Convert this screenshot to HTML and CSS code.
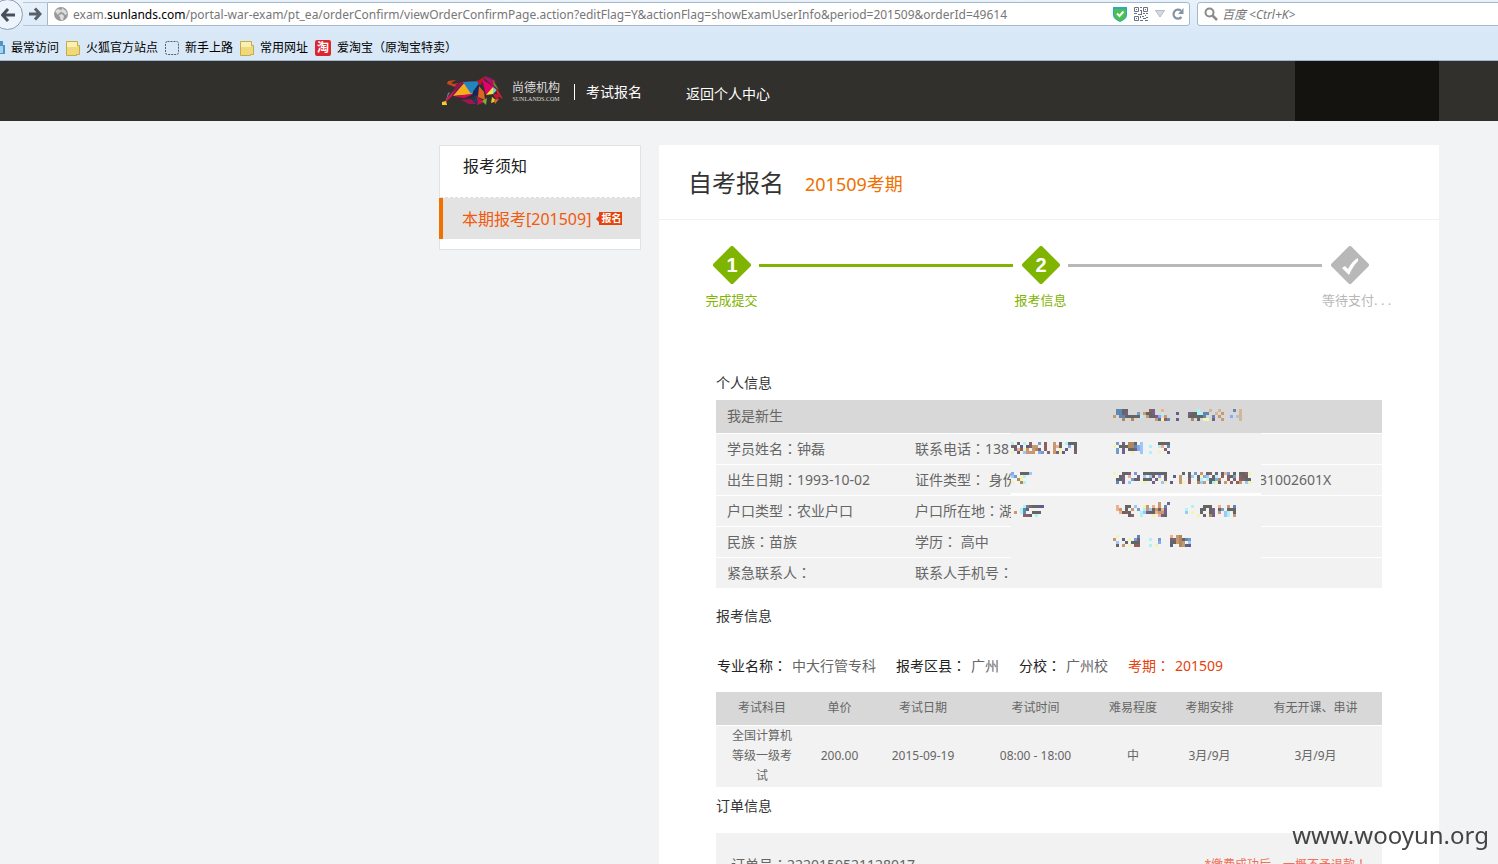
FILE: index.html
```html
<!DOCTYPE html>
<html lang="zh-CN">
<head>
<meta charset="utf-8">
<title>考试报名</title>
<link rel="stylesheet" href="styles.css">
</head>
<body>
<div class="browser">
  <div class="toolbar">
    <button class="back" aria-label="后退"><svg width="14" height="14" viewBox="0 0 14 14"><path d="M7 1 1.500 7 7 13M2 7h12" fill="none" stroke="#484f5a" stroke-width="3"/></svg></button>
    <button class="forward" aria-label="前进"><svg width="13" height="14" viewBox="0 0 13 14"><path d="M6 1.500 11 7 6 12.500M0 7h11" fill="none" stroke="#59616d" stroke-width="3"/></svg></button>
    <div class="address">
      <svg width="14" height="14" viewBox="0 0 14 14"><circle cx="7" cy="7" r="7" fill="#9a9a9a"/><path d="M1 4l3-2 3 1 0 2-2 1-1 2zM8 1l4 3 1 3-2 1-1-2-3-1zM5 8l3-1 2 2-1 4-2 0z" fill="#dedede"/></svg>
      <div class="url" role="textbox" contenteditable="true" spellcheck="false" aria-label="地址">exam.<b>sunlands.com</b>/portal-war-exam/pt_ea/orderConfirm/viewOrderConfirmPage.action?editFlag=Y&amp;actionFlag=showExamUserInfo&amp;period=201509&amp;orderId=49614</div>
      <svg width="14" height="15" viewBox="0 0 14 15"><path d="M0 0h14v8q0 4-7 7Q0 12 0 8z" fill="#2aa7c4"/><path d="M1 2h12v6q0 4-6 6-6-2-6-6z" fill="#4bbf4f"/><path d="M4 6.500 6.500 9 10.500 4.500" fill="none" stroke="#fff" stroke-width="2"/></svg>
      <svg width="14" height="14" viewBox="0 0 14 14" fill="none" stroke="#68717d"><path d="M.5.5h4v4h-4zM9.500.5h4v4h-4zM.5 9.500h4v4h-4z"/><path d="M2 2.500h1M11 2.500h1M2 11.500h1M6 .5h2M6 3.500h2M7.500 4v3M0 6.500h3M4 7.500h4M9 6.500h2M12 6.500h2M6.500 9v2M8 9.500h2M11 8.500h1M12 10.500h2M9 11.500h3M6 13.500h3M11 13.500h3"/></svg>
      <svg width="10" height="8" viewBox="0 0 10 8"><path d="M.5.5h9L5 7z" fill="#d5dae0" stroke="#b3bac3"/></svg>
      <button class="reload" aria-label="刷新"><svg width="12" height="12" viewBox="0 0 12 12"><path d="M9.500 9A4.500 4.500 0 1 1 9 2.800" fill="none" stroke="#8594a5" stroke-width="2.200"/><path d="M11.500 0v6H6z" fill="#8594a5"/></svg></button>
    </div>
    <label class="search">
      <svg width="14" height="14" viewBox="0 0 14 14" fill="none" stroke="#8b8b8b"><circle cx="5.500" cy="5.500" r="4" stroke-width="2"/><path d="M8.500 8.500 13 13" stroke-width="2.500"/></svg>
      <input type="text" placeholder="百度 &lt;Ctrl+K&gt;" aria-label="搜索">
    </label>
  </div>
  <nav class="bookmarks">
    <a href="#"><svg width="5" height="15" viewBox="0 0 5 15"><path d="M0 0h3v4h2v9H0z" fill="#4f94c4"/><path d="M0 5h3v7H0z" fill="#a5d2ee"/></svg>最常访问</a>
    <a href="#"><svg width="14" height="15" viewBox="0 0 14 15"><path d="M.5.500h11v4h2v9h-3v1H.5z" fill="#eed97c" stroke="#c7ab49"/><path d="M1 1h10v5H1z" fill="#fbf0b2"/></svg>火狐官方站点</a>
    <a href="#"><svg width="14" height="14" viewBox="0 0 14 14"><rect x=".5" y=".5" width="13" height="13" rx="2" fill="none" stroke="#555f6b" stroke-dasharray="2 1"/></svg>新手上路</a>
    <a href="#"><svg width="14" height="15" viewBox="0 0 14 15"><path d="M.5.500h11v4h2v9h-3v1H.5z" fill="#eed97c" stroke="#c7ab49"/><path d="M1 1h10v5H1z" fill="#fbf0b2"/></svg>常用网址</a>
    <a href="#"><span class="tao">淘</span><span>爱淘宝<i>（</i>原淘宝特卖<i>）</i></span></a>
  </nav>
</div>

<div class="view">
  <header class="site-head">
    <div class="wrap head-row">
      <a class="logo" href="#">
        <svg width="64" height="32" viewBox="0 0 64 32">
          <path d="M9 10 6 9 7 6l8-1-5 3 3 1 4-1-3 4z" fill="#c44a1c"/>
          <path d="M15 9 24 6 11 22z" fill="#8e1457"/><path d="M14 14 11 21l-8 8 2-5z" fill="#d11a53"/>
          <path d="M24 7 34 6 16 9z" fill="#c91b2c"/><path d="M24 7 33 19 12 21z" fill="#f7ad1c"/><path d="M22 7 40 6 30 19z" fill="#2385bd"/>
          <path d="M40 6 28 23 40 18z" fill="#14275d"/><path d="M12 21 33 19 23 23z" fill="#e4005f"/><path d="M36 6 45 1 39 11z" fill="#c11328"/><path d="M44 1 52 4 43 4z" fill="#961b62"/><path d="M41 4 53 12 45 20z" fill="#e3006c"/><path d="M43 3 54 5 53 12z" fill="#b01363"/><path d="M52 5 58 15 53 11z" fill="#6c8a2b"/>
          <path d="M38 11 37 22 44 25 43 17z" fill="#de6422"/><path d="M45 20 52 12 52 19z" fill="#f7e22c"/><path d="M52 12 56 15 52 19z" fill="#78c8eb"/><path d="M54 12 58 17 62 24 57 21z" fill="#dc1e35"/><path d="M52 19 59 19 56 26z" fill="#bc173a"/>
          <path d="M20 25 30 24 35 29 28 29z" fill="#a01450"/><path d="M35 21 44 27 36 30z" fill="#c8153f"/><path d="M36 22 37 29 31 25z" fill="#1d3a70"/><path d="M41 26 46 23 45 30z" fill="#7cad38"/><path d="M51 22 56 26 50 28z" fill="#e5c72e"/><path d="M53 25 58 24 54 29z" fill="#d46b20"/>
          <path d="M5 25 7 18 9 17 4 27z" fill="#648ea4"/><path d="M1 27 5 26 6 30 1 30z" fill="#f4cc2a"/>
        </svg>
        <span class="brand"><strong>尚德机构</strong><small>SUNLANDS.COM</small></span>
      </a>
      <span class="site-name">考试报名</span>
      <a class="home" href="#">返回个人中心</a>
      <div class="account"></div>
    </div>
  </header>

  <div class="wrap columns">
    <aside class="side">
      <a href="#">报考须知</a>
      <a class="active" href="#">本期报考[201509]<span class="badge">报名</span></a>
    </aside>
    <main class="panel">
      <div class="title"><h1>自考报名</h1><span>201509考期</span></div>
      <div class="steps">
        <div class="step"><svg width="40" height="38" viewBox="0 0 40 38"><rect x="6" y="5" width="28" height="28" rx="2" transform="rotate(45 20 19)"/><text x="20" y="26" text-anchor="middle">1</text></svg><span>完成提交</span></div>
        <div class="bar"></div>
        <div class="step"><svg width="40" height="38" viewBox="0 0 40 38"><rect x="6" y="5" width="28" height="28" rx="2" transform="rotate(45 20 19)"/><text x="20" y="26" text-anchor="middle">2</text></svg><span>报考信息</span></div>
        <div class="bar wait"></div>
        <div class="step wait"><svg width="40" height="38" viewBox="0 0 40 38"><rect x="6" y="5" width="28" height="28" rx="2" transform="rotate(45 20 19)"/><path d="M12 22l3-2 3 3q4-8 10-11v3q-5 5-9 14z" fill="#fff"/></svg><span>等待支付. . .</span></div>
      </div>

      <div class="content">
        <h2>个人信息</h2>
        <div class="masked">
          <table class="person">
            <colgroup><col class="p1"><col class="p2"><col class="p3"></colgroup>
            <thead><tr><th colspan="3">我是新生</th></tr></thead>
            <tbody>
              <tr><td>学员姓名<i>：</i>钟磊</td><td>联系电话<i>：</i>138</td><td></td></tr>
              <tr><td>出生日期<i>：</i>1993-10-02</td><td>证件类型<i>：</i> 身份</td><td class="tail">31002601X</td></tr>
              <tr><td>户口类型<i>：</i>农业户口</td><td>户口所在地<i>：</i>湖</td><td></td></tr>
              <tr><td>民族<i>：</i>苗族</td><td>学历<i>：</i> 高中</td><td></td></tr>
              <tr><td>紧急联系人<i>：</i></td><td>联系人手机号<i>：</i></td><td></td></tr>
            </tbody>
          </table>
          <svg class="mask" id="mask" width="252" height="188" viewBox="0 0 252 188" shape-rendering="crispEdges" aria-hidden="true">
            <path d="M0 33h250v154H0z" fill="#f2f2f2"/><path d="M0 93h250v3H0z" fill="#fff"/>
          </svg>
        </div>

        <h2 class="gap">报考信息</h2>
        <dl class="facts">
          <div><dt>专业名称<i>：</i></dt><dd>中大行管专科</dd></div>
          <div><dt>报考区县<i>：</i></dt><dd>广州</dd></div>
          <div><dt>分校<i>：</i></dt><dd>广州校</dd></div>
          <div class="hot"><dt>考期<i>：</i></dt><dd>201509</dd></div>
        </dl>
        <table class="exam">
          <colgroup><col class="e1"><col class="e2"><col class="e3"><col class="e4"><col class="e5"><col class="e6"><col class="e7"></colgroup>
          <thead><tr><th>考试科目</th><th>单价</th><th>考试日期</th><th>考试时间</th><th>难易程度</th><th>考期安排</th><th>有无开课、串讲</th></tr></thead>
          <tbody><tr><td>全国计算机等级一级考试</td><td>200.00</td><td>2015-09-19</td><td>08:00 - 18:00</td><td>中</td><td>3月/9月</td><td>3月/9月</td></tr></tbody>
        </table>

        <h2 class="order-title">订单信息</h2>
        <div class="order"><span>订单号<i>：</i>2220150521128017</span><em>*缴费成功后，一概不予退款<i>！</i></em></div>
      </div>
    </main>
  </div>
</div>
<div class="watermark">www.wooyun.org</div>
<script src="script.js"></script>
</body>
</html>
```
FILE: styles.css
```css
* { box-sizing: border-box; }
body {
  margin: 0;
  height: 100vh;
  display: flex;
  flex-direction: column;
  overflow: hidden;
  background: #f1f3f5;
  color: #666;
  font: 14px/20px "Noto Sans", "Noto Sans CJK SC", sans-serif;
}
a { color: inherit; text-decoration: none; }
button { border: 0; padding: 0; background: none; }
svg { flex: none; display: block; }
i { font-style: normal; font-family: "Noto Sans CJK TC", sans-serif; line-height: 0; -webkit-locale: "zh-TW"; }
h1, h2, dl, dd { margin: 0; font-weight: 400; }

.browser {
  flex: none;
  border-bottom: 1px solid #9db5cd;
  background: linear-gradient(#e9f2fb, #d9e8f7 34px);
  font-size: 12px;
  color: #000;
}
.toolbar { display: flex; height: 34px; padding-top: 2px; align-items: flex-start; }
.back {
  width: 31px; height: 31px; margin: -3px 0 0 -8px; padding-left: 8px;
  border: 1px solid #8d9db0; border-radius: 50%;
  background: #edf4fb;
}
.forward { width: 24px; height: 24px; padding-left: 6px; border: solid #b4c6d9; border-width: 1px 0; }
.address, .search {
  display: flex; align-items: center; height: 24px;
  border: 1px solid #a4b8cc; border-radius: 0 3px 3px 0; background: #fff;
}
.address { flex: 1; min-width: 0; padding: 0 5px 0 6px; gap: 7px; }
.url { flex: 1; min-width: 0; margin-left: -2px; padding-top: 2px; white-space: nowrap; overflow: hidden; outline: 0; color: #777; }
.url b { font-weight: 400; color: #000; }
.search { width: 308px; margin: 0 -7px 0 7px; padding-left: 6px; gap: 4px; border-radius: 3px; }
.search input { flex: 1; min-width: 0; padding: 2px 0 0; border: 0; outline: 0; background: none; font: italic 12px/20px "Noto Sans", "Noto Sans CJK SC", sans-serif; }
.search input::placeholder { color: #777; }
.bookmarks { display: flex; gap: 7px; height: 26px; padding-top: 2px; align-items: center; }
.bookmarks a { display: flex; align-items: center; gap: 6px; white-space: nowrap; }
.tao { width: 16px; height: 16px; border-radius: 2px; background: #dd2530; color: #fff; font-weight: 700; line-height: 15px; text-align: center; }

.view { flex: 1; min-height: 0; overflow: hidden; }
.wrap { max-width: 1000px; margin: 0 59px 0 auto; }
.site-head { background: #32302c; color: #fff; }
.head-row { display: flex; height: 60px; align-items: center; }
.logo { display: flex; align-items: center; margin-left: 2px; gap: 7px; }
.brand { display: flex; flex-direction: column; width: 48px; padding-top: 2px; color: #ddd; font-family: "Liberation Serif", "Noto Sans CJK SC", serif; }
.brand strong { font-size: 12px; font-weight: 400; line-height: 14px; }
.brand small { font-size: 6px; line-height: 8px; text-align: center; }
.site-name { margin: 2px 0 0 14px; padding-left: 11px; border-left: 1px solid #fff; line-height: 16px; }
.home { margin: 5px 0 0 44px; }
.account { width: 144px; height: 60px; margin-left: auto; background: #141310; }

.columns { display: grid; grid-template-columns: 202px 1fr; gap: 18px; margin-top: 24px; align-items: start; }
.side { border: 1px solid #e3e3e3; background: #fff; padding-bottom: 10px; font-size: 16px; color: #222; }
.side a { display: flex; height: 52px; padding-left: 23px; line-height: 40px; border-bottom: 1px dashed #ddd; }
.side .active { height: 41px; margin-left: -1px; padding-left: 19px; align-items: center; gap: 8px; border: 0; border-left: 4px solid #f07000; background: #e3e3e3; color: #f2590c; }
.badge { position: relative; padding: 0 1px 0 2px; background: #e5420c; color: #fff; font-size: 10px; font-weight: 700; line-height: 13px; }
.badge::before { content: ""; position: absolute; left: -3px; top: 4px; border: solid transparent; border-width: 3px 3px 3px 0; border-right-color: #e5420c; }

.panel { background: #fff; min-height: 100vh; }
.title { display: flex; align-items: center; gap: 21px; height: 75px; padding: 2px 0 0 29px; border-bottom: 1px solid #f0f0f0; }
.title h1 { font-size: 24px; line-height: 32px; color: #333; }
.title span { padding-top: 2px; font-size: 18px; line-height: 24px; color: #f07000; }
.steps { display: flex; padding: 26px 62px 0 45px; color: #7fb400; font-size: 13px; }
.step { display: flex; flex-direction: column; align-items: center; gap: 6px; width: 55px; white-space: nowrap; fill: #7fb400; }
.step text { fill: #fff; font: 700 20px "Liberation Sans", sans-serif; }
.step.wait { fill: #b8b8b8; color: #b8b8b8; }
.step.wait span { align-self: flex-start; }
.bar { flex: 1; height: 3px; margin-top: 18px; background: #7fb400; }
.bar.wait { background: #b8b8b8; }

.content { padding: 63px 57px 0; }
h2 { font-size: 14px; line-height: 20px; color: #333; }
.masked { position: relative; margin-top: 7px; }
.mask { position: absolute; left: 295px; top: 0; }
table { width: 100%; table-layout: fixed; border-collapse: collapse; }
th { height: 33px; padding: 0; background: #d8d8d8; font-weight: 400; }
td { padding: 0; border-top: 1px solid #fff; background: #f2f2f2; }
.person th, .person td { padding-left: 11px; text-align: left; white-space: nowrap; }
.person td { height: 31px; }
.person .tail { padding-left: 156px; }
.p1 { width: 188px; } .p2 { width: 199px; } .p3 { width: 279px; }
.gap { margin-top: 18px; }
.facts { display: flex; gap: 20px; margin: 30px 0 16px 1px; }
.facts div { display: flex; gap: 5px; align-items: baseline; }
.facts dt { color: #222; }
.facts .hot, .facts .hot dt { color: #e5420c; }
.exam { font-size: 12px; text-align: center; }
.exam td { height: 62px; }
.exam td:first-child { padding: 0 16px; }
.e1 { width: 92px; } .e2 { width: 63px; } .e3 { width: 104px; } .e4 { width: 121px; } .e5 { width: 74px; } .e6 { width: 79px; } .e7 { width: 133px; }
.order-title { margin: 9px 0 17px; }
.order { display: flex; justify-content: space-between; padding: 22px 15px 40px; background: #f2f2f2; }
.order em { font-size: 12px; font-style: normal; color: #f0705a; }

.watermark { position: fixed; right: 9px; bottom: 11px; font: 24px/36px "Noto Sans", sans-serif; color: #444; }
```
FILE: script.js
```js
// Paints the mosaic strips that hide private fields; each character is a 3px block.
const colors = {
  k: '#656565', b: '#759dca', s: '#5f87b1', l: '#9cc8f5', c: '#aef3f5', p: '#75608a', n: '#5f608a',
  t: '#c89870', d: '#b08860', o: '#f2ae88', r: '#8c6060', y: '#f4f3b0', u: '#86aaf0', a: '#d8b490'
};
const strips = [
  [102, 9, [
    '.sskk.......rp..o...........c...a..a....s.a',
    '.sskp...b.tkkp..c....n...pkkccss..a.t.....a',
    't.sskkkkkc.tkkpu.t.......kkkkks..s.t...u.la',
    '...d..d.......tpyrs..n....d.k.yy.p..t.....a']],
  [0, 42, [
    'c.k.c.r..b.r..t.k.ckkk',
    'rk.n.kptt..r..tok..u.k',
    '.poryt.tdr.r..t.y.n..k',
    'y.k.lttt.ub.r.tpyn...r']],
  [102, 42, [
    '.b.p.ddk.l.....kkkk',
    'y.kkkddsul..c..co.s',
    '.b.p.kkpul.......r.',
    '.b.p..y..l..c..y..n']],
  [0, 72, [
    'u..kkkl',
    'lb.yc..',
    '..dy...',
    'y..dc..']],
  [102, 72, [
    'y..kkp.b..kkkkkkkk.....k.k.b.t.kr.p.kob.k.kkry',
    '..kp.o..p.l.lp.u.k..n.t..kl.kyul.kc.r.rkb.rkk.',
    '.kkp..bkk.kkk.py.p....t..r..kc.ckkud..r.r.rrkk',
    '.s.p.l....y..p..ly.n..ty.r..dlt.kcyk.t.r.rt.ly']],
  [3, 105, [
    '...csrkknn',
    '..csk.....',
    't.cs..kkk.',
    '...rrk.c..']],
  [102, 102, [
    '...............t..p...........................',
    '.o..kk.l..yt.o.t.s........c...kkk..o..t.s',
    '.ot.k.t.b.ctlktkop......c....kk.kp.kb.kkk',
    '..okrk...clpkkottp......l.y..k..kp.t.lc.k',
    '.....kr..c...y.opk..........y.k.dp...lc.t']],
  [102, 135, [
    '.y......s..........o.td...',
    't..n.y.bp...c..b...prtdksb',
    '.l..k.kkk......u...kktdt.l',
    '.k.t.y.rr...c.y....n..dtnn']]
];
const mask = document.getElementById('mask');
for (const [x, y, rows] of strips) {
  rows.forEach((row, r) => [...row].forEach((key, c) => {
    if (!colors[key]) return;
    const block = document.createElementNS('http://www.w3.org/2000/svg', 'rect');
    block.setAttribute('x', x + c * 3);
    block.setAttribute('y', y + r * 3);
    block.setAttribute('width', 3);
    block.setAttribute('height', 3);
    block.setAttribute('fill', colors[key]);
    mask.append(block);
  }));
}
```
